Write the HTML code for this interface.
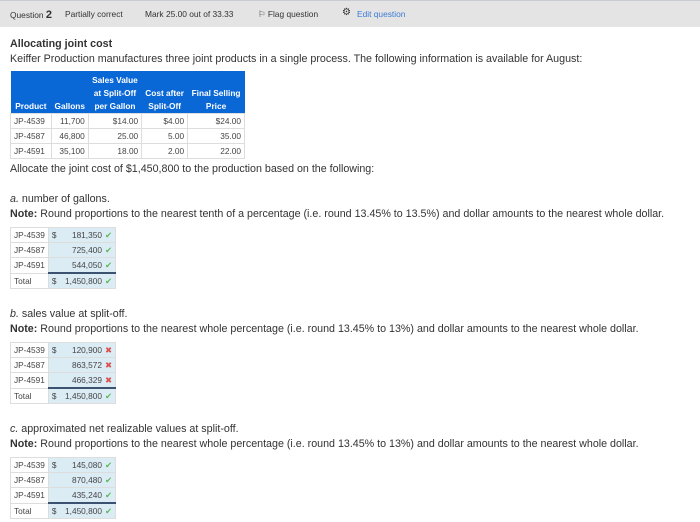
<!DOCTYPE html>
<html><head><meta charset="utf-8"><style>
body{margin:0;width:700px;height:522px;background:#fff;font-family:"Liberation Sans",sans-serif;color:#333;position:relative;overflow:hidden}
.hdr{position:absolute;left:0;top:0;width:700px;height:26px;background:#e4e4e4;border-top:1px solid #c8cbd3;font-size:8.4px;color:#333}
.hdr span{position:absolute;top:8px}
.t{position:absolute;left:10px;font-size:10.7px;white-space:nowrap}
table{border-collapse:collapse;position:absolute;font-size:8.3px}
.dt td{border:1px solid #ddd;height:14px;padding:0 3px;text-align:right;color:#444}
.dt td:first-child{text-align:left}
.dt th{background:#0a67d6;color:#fff;font-weight:bold;text-align:center;padding:0 2px;line-height:13px;vertical-align:bottom}
.at td{border:1px solid #ddd;height:14px;padding:0 3px;color:#444}
.at td.v{background:#dcecf5;width:60px;text-align:right;padding-right:3px;position:relative}
.at tr.tot td.v{border-top:2px solid #3b5370}
.at td.v b{position:absolute;left:3px;font-weight:normal}
.ok{color:#5cb85c;margin-left:3px}
.no{color:#d9534f;margin-left:3px}
</style></head><body>
<div class="hdr">
<span style="left:10px">Question <b style="font-size:11px">2</b></span>
<span style="left:65px">Partially correct</span>
<span style="left:145px">Mark 25.00 out of 33.33</span>
<span style="left:258px">⚐ Flag question</span>
<span style="left:342px;font-size:10px;top:6px">⚙</span>
<span style="left:357px;color:#3a7bd5">Edit question</span>
</div>
<div class="t" style="top:38px;font-weight:bold">Allocating joint cost</div>
<div class="t" style="top:53px">Keiffer Production manufactures three joint products in a single process. The following information is available for August:</div>
<table class="dt" style="left:10px;top:71px;width:235px">
<tr><th style="height:42px">Product</th><th>Gallons</th><th>Sales Value<br>at Split-Off<br>per Gallon</th><th>Cost after<br>Split-Off</th><th>Final Selling<br>Price</th></tr>
<tr><td>JP-4539</td><td>11,700</td><td>$14.00</td><td>$4.00</td><td>$24.00</td></tr>
<tr><td>JP-4587</td><td>46,800</td><td>25.00</td><td>5.00</td><td>35.00</td></tr>
<tr><td>JP-4591</td><td>35,100</td><td>18.00</td><td>2.00</td><td>22.00</td></tr>
</table>
<div class="t" style="top:163px">Allocate the joint cost of $1,450,800 to the production based on the following:</div>

<div class="t" style="top:193px"><i>a.</i> number of gallons.</div>
<div class="t" style="top:208px"><b>Note:</b> Round proportions to the nearest tenth of a percentage (i.e. round 13.45% to 13.5%) and dollar amounts to the nearest whole dollar.</div>
<table class="at" style="left:10px;top:227px">
<tr><td>JP-4539</td><td class="v"><b>$</b>181,350<span class="ok">✔</span></td></tr>
<tr><td>JP-4587</td><td class="v">725,400<span class="ok">✔</span></td></tr>
<tr><td>JP-4591</td><td class="v">544,050<span class="ok">✔</span></td></tr>
<tr class="tot"><td>Total</td><td class="v"><b>$</b>1,450,800<span class="ok">✔</span></td></tr>
</table>

<div class="t" style="top:308px"><i>b.</i> sales value at split-off.</div>
<div class="t" style="top:323px"><b>Note:</b> Round proportions to the nearest whole percentage (i.e. round 13.45% to 13%) and dollar amounts to the nearest whole dollar.</div>
<table class="at" style="left:10px;top:342px">
<tr><td>JP-4539</td><td class="v"><b>$</b>120,900<span class="no">✖</span></td></tr>
<tr><td>JP-4587</td><td class="v">863,572<span class="no">✖</span></td></tr>
<tr><td>JP-4591</td><td class="v">466,329<span class="no">✖</span></td></tr>
<tr class="tot"><td>Total</td><td class="v"><b>$</b>1,450,800<span class="ok">✔</span></td></tr>
</table>

<div class="t" style="top:423px"><i>c.</i> approximated net realizable values at split-off.</div>
<div class="t" style="top:438px"><b>Note:</b> Round proportions to the nearest whole percentage (i.e. round 13.45% to 13%) and dollar amounts to the nearest whole dollar.</div>
<table class="at" style="left:10px;top:457px">
<tr><td>JP-4539</td><td class="v"><b>$</b>145,080<span class="ok">✔</span></td></tr>
<tr><td>JP-4587</td><td class="v">870,480<span class="ok">✔</span></td></tr>
<tr><td>JP-4591</td><td class="v">435,240<span class="ok">✔</span></td></tr>
<tr class="tot"><td>Total</td><td class="v"><b>$</b>1,450,800<span class="ok">✔</span></td></tr>
</table>
</body></html>
